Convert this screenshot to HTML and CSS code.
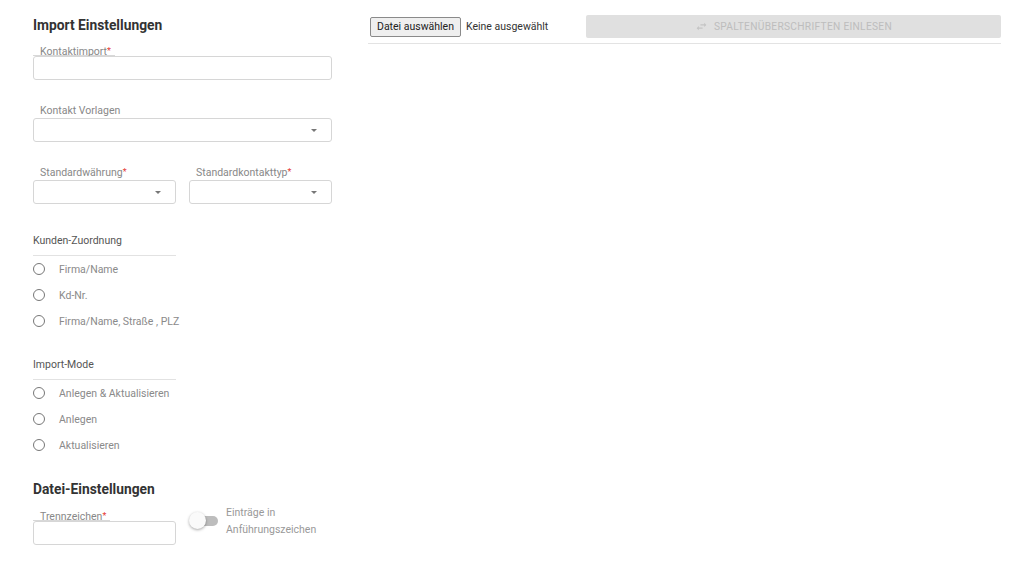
FILE: index.html
```html
<!DOCTYPE html>
<html lang="de">
<head>
<meta charset="utf-8">
<title>Import</title>
<link rel="stylesheet" href="styles.css">
</head>
<body>
<div class="page">
  <div class="left">
    <h2 class="heading">Import Einstellungen</h2>

    <div class="field f-first">
      <div class="legend"><span>Kontaktimport<span class="req">*</span></span></div>
      <div class="box"></div>
    </div>

    <div class="field f-gap">
      <div class="label">Kontakt Vorlagen</div>
      <div class="box select"><span class="caret"></span></div>
    </div>

    <div class="row f-gap2">
      <div class="field half">
        <div class="label">Standardwährung<span class="req">*</span></div>
        <div class="box select"><span class="caret"></span></div>
      </div>
      <div class="field half">
        <div class="label">Standardkontakttyp<span class="req">*</span></div>
        <div class="box select"><span class="caret"></span></div>
      </div>
    </div>

    <div class="group g-first">
      <div class="group-title">Kunden-Zuordnung</div>
      <div class="radio"><span class="circle"></span><span class="rtext">Firma/Name</span></div>
      <div class="radio"><span class="circle"></span><span class="rtext">Kd-Nr.</span></div>
      <div class="radio"><span class="circle"></span><span class="rtext">Firma/Name, Straße , PLZ</span></div>
    </div>

    <div class="group">
      <div class="group-title">Import-Mode</div>
      <div class="radio"><span class="circle"></span><span class="rtext">Anlegen &amp; Aktualisieren</span></div>
      <div class="radio"><span class="circle"></span><span class="rtext">Anlegen</span></div>
      <div class="radio"><span class="circle"></span><span class="rtext">Aktualisieren</span></div>
    </div>

    <h2 class="heading h-second">Datei-Einstellungen</h2>
    <div class="row r-file">
      <div class="field half">
        <div class="legend"><span>Trennzeichen<span class="req">*</span></span></div>
        <div class="box"></div>
      </div>
      <div class="toggle-wrap">
        <span class="toggle"><span class="track"></span><span class="thumb"></span></span>
        <span class="toggle-text">Einträge in<br>Anführungszeichen</span>
      </div>
    </div>
  </div>

  <div class="right">
    <div class="toolbar">
      <div class="file">
        <span class="file-btn">Datei auswählen</span>
        <span class="file-name">Keine ausgewählt</span>
      </div>
      <div class="read-btn">
        <svg class="swap" viewBox="0 0 24 24" width="13" height="13"><path d="M6.99 11L3 15l3.99 4v-3H14v-2H6.99v-3zM21 9l-3.99-4v3H10v2h7.01v3L21 9z" fill="#c4c4c4"/></svg>
        <span>SPALTENÜBERSCHRIFTEN EINLESEN</span>
      </div>
    </div>
  </div>
</div>
</body>
</html>
```

FILE: styles.css
```css
* { box-sizing: border-box; }
html, body { margin: 0; padding: 0; background: #fff; }
body { font-family: Roboto, "Liberation Sans", Arial, sans-serif; color: #333; }

.page {
  display: flex;
  gap: 36px;
  padding: 17px 23px 0 33px;
}

.left { width: 299px; flex: none; }

.heading {
  margin: 0;
  font-size: 13.8px;
  line-height: 16px;
  font-weight: 700;
  color: #333;
}
.h-second { margin-top: 23px; }

.field { display: flex; flex-direction: column; }
.f-first { margin-top: 14px; }
.f-gap { margin-top: 25px; }
.f-gap2 { margin-top: 24px; }

.legend {
  display: flex;
}
.legend > span {
  display: inline-block;
  font-size: 10.5px;
  height: 9px;
  line-height: 8px;
  color: #888;
  padding: 0 4px 0 7px;
  border-bottom: 1px solid #d8d8d8;
}

.label {
  font-size: 10.5px;
  line-height: 12px;
  color: #888;
  padding-left: 7px;
  margin-bottom: 1px;
}
.req { color: #e53935; font-size: 9px; vertical-align: 1px; }

.box {
  height: 24px;
  border: 1px solid #d6d6d6;
  border-radius: 3px;
  background: #fff;
  position: relative;
}
.select { display: flex; align-items: center; justify-content: flex-end; padding-right: 14px; }
.caret {
  width: 0; height: 0;
  border-left: 3px solid transparent;
  border-right: 3px solid transparent;
  border-top: 3px solid #777;
}

.row { display: flex; gap: 13px; }
.half { width: 143px; }

.group { margin-top: 24px; }
.g-first { margin-top: 30px; }
.group-title {
  width: 143px;
  font-size: 10.5px;
  line-height: 14px;
  color: #555;
  padding-bottom: 7px;
  border-bottom: 1px solid #e2e2e2;
}
.radio {
  display: flex;
  align-items: center;
  height: 26px;
}
.circle {
  width: 12px; height: 12px;
  border: 1.3px solid #777;
  border-radius: 50%;
  flex: none;
}
.rtext {
  margin-left: 14px;
  font-size: 10.5px;
  color: #8a8a8a;
}

.r-file { margin-top: 15px; align-items: flex-start; }
.toggle-wrap { display: flex; align-items: flex-start; gap: 8px; margin-top: -8px; }
.toggle { position: relative; width: 29px; height: 17px; margin-top: 8px; flex: none; }
.track {
  position: absolute; left: 5px; top: 4px;
  width: 24px; height: 10px;
  border-radius: 5px;
  background: #bdbdbd;
}
.thumb {
  position: absolute; left: 0; top: 0;
  width: 17px; height: 17px;
  border-radius: 50%;
  background: #fafafa;
  box-shadow: 0 1px 3px rgba(0,0,0,0.35);
}
.toggle-text {
  font-size: 10.5px;
  line-height: 17px;
  color: #999;
}

.right { flex: 1; }
.toolbar {
  display: flex;
  align-items: center;
  padding-bottom: 5px;
  border-bottom: 1px solid #e3e3e3;
  margin-top: -2px;
}
.file { width: 218px; flex: none; display: flex; align-items: center; padding-left: 2px; }
.file-btn {
  display: inline-block;
  height: 20px;
  line-height: 18px;
  padding: 0 6px;
  font-size: 10.5px;
  color: #222;
  background: #efefef;
  border: 1px solid #8a8a8a;
  border-radius: 2px;
}
.file-name { margin-left: 5px; font-size: 10.5px; color: #333; }

.read-btn {
  flex: 1;
  height: 23px;
  background: #e0e0e0;
  border-radius: 2px;
  display: flex;
  align-items: center;
  justify-content: center;
  gap: 6px;
  font-size: 10.2px;
  letter-spacing: 0.3px;
  color: #bdbdbd;
}
.swap { flex: none; }
```
